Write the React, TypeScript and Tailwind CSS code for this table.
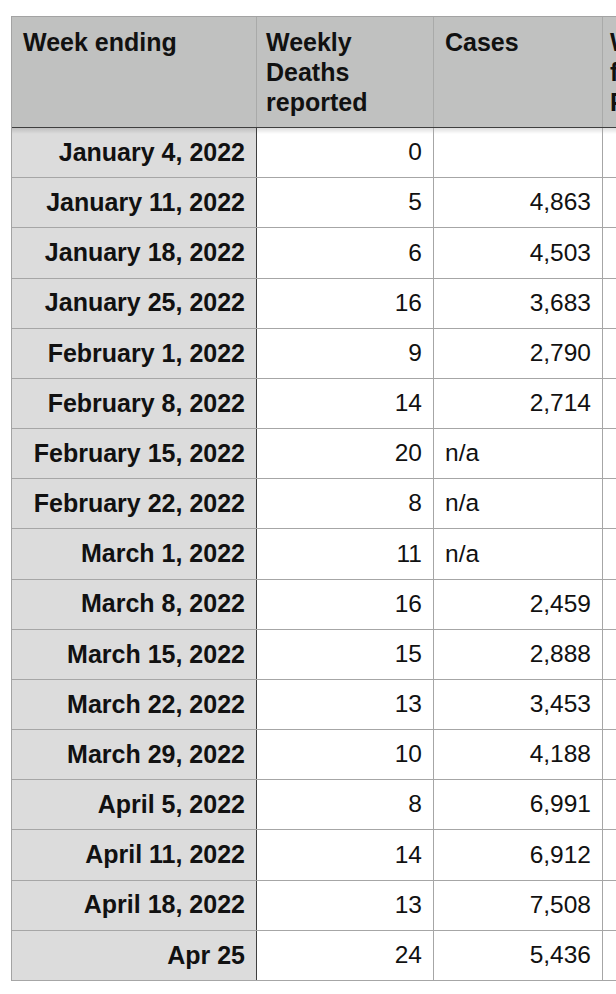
import React from 'react';

type Row = {
    week: string;
    deaths: string;
    cases: string;
};

const rows: Row[] = [
    { week: 'January 4, 2022', deaths: '0', cases: '' },
    { week: 'January 11, 2022', deaths: '5', cases: '4,863' },
    { week: 'January 18, 2022', deaths: '6', cases: '4,503' },
    { week: 'January 25, 2022', deaths: '16', cases: '3,683' },
    { week: 'February 1, 2022', deaths: '9', cases: '2,790' },
    { week: 'February 8, 2022', deaths: '14', cases: '2,714' },
    { week: 'February 15, 2022', deaths: '20', cases: 'n/a' },
    { week: 'February 22, 2022', deaths: '8', cases: 'n/a' },
    { week: 'March 1, 2022', deaths: '11', cases: 'n/a' },
    { week: 'March 8, 2022', deaths: '16', cases: '2,459' },
    { week: 'March 15, 2022', deaths: '15', cases: '2,888' },
    { week: 'March 22, 2022', deaths: '13', cases: '3,453' },
    { week: 'March 29, 2022', deaths: '10', cases: '4,188' },
    { week: 'April 5, 2022', deaths: '8', cases: '6,991' },
    { week: 'April 11, 2022', deaths: '14', cases: '6,912' },
    { week: 'April 18, 2022', deaths: '13', cases: '7,508' },
    { week: 'Apr 25', deaths: '24', cases: '5,436' },
];

const shadow = 'bg-[linear-gradient(to_bottom,rgba(0,0,0,0.13),rgba(0,0,0,0)_6px)]';

export default function App() {
    return (
        <div className="w-[616px] h-[994px] overflow-hidden bg-white pt-[16px] pl-[11px] text-[24.5px] text-[#111] font-['Liberation_Sans',Arial,sans-serif]">
            <div className="w-[720px] border-l border-t border-[#a3a3a3]">
                {/* header */}
                <div className="flex h-[111px] bg-[#c0c1c0] border-b border-[#3f3f3f] font-bold text-[25px] leading-[30px]">
                    <div className="w-[245px] shrink-0 border-r border-[#a9aaa9] pl-[11px] pt-[10px]">Week ending</div>
                    <div className="w-[177px] shrink-0 border-r border-[#a9aaa9] pl-[9px] pt-[10px]">
                        Weekly<br />Deaths<br />reported
                    </div>
                    <div className="w-[169px] shrink-0 border-r border-[#a9aaa9] pl-[11px] pt-[10px]">Cases</div>
                    <div className="flex-1 pl-[7px] pt-[10px]">
                        Weekly<br />flu<br />Positivity
                    </div>
                </div>
                {/* body */}
                {rows.map((r, i) => (
                    <div key={r.week} className="flex h-[50.18px] border-b border-[#a6a6a6]">
                        <div className={`w-[245px] shrink-0 flex items-center justify-end pr-[11px] font-bold text-[25px] bg-[#dcdcdc] border-r border-[#3f3f3f] ${i === 0 ? shadow : ''}`}>
                            {r.week}
                        </div>
                        <div className={`w-[177px] shrink-0 flex items-center justify-end pr-[11px] border-r border-[#a6a6a6] ${i === 0 ? shadow : ''}`}>
                            {r.deaths}
                        </div>
                        <div className={`w-[169px] shrink-0 flex items-center border-r border-[#a6a6a6] px-[11px] ${r.cases === 'n/a' ? 'justify-start' : 'justify-end'} ${i === 0 ? shadow : ''}`}>
                            {r.cases}
                        </div>
                        <div className={`flex-1 ${i === 0 ? shadow : ''}`}></div>
                    </div>
                ))}
            </div>
        </div>
    );
}
